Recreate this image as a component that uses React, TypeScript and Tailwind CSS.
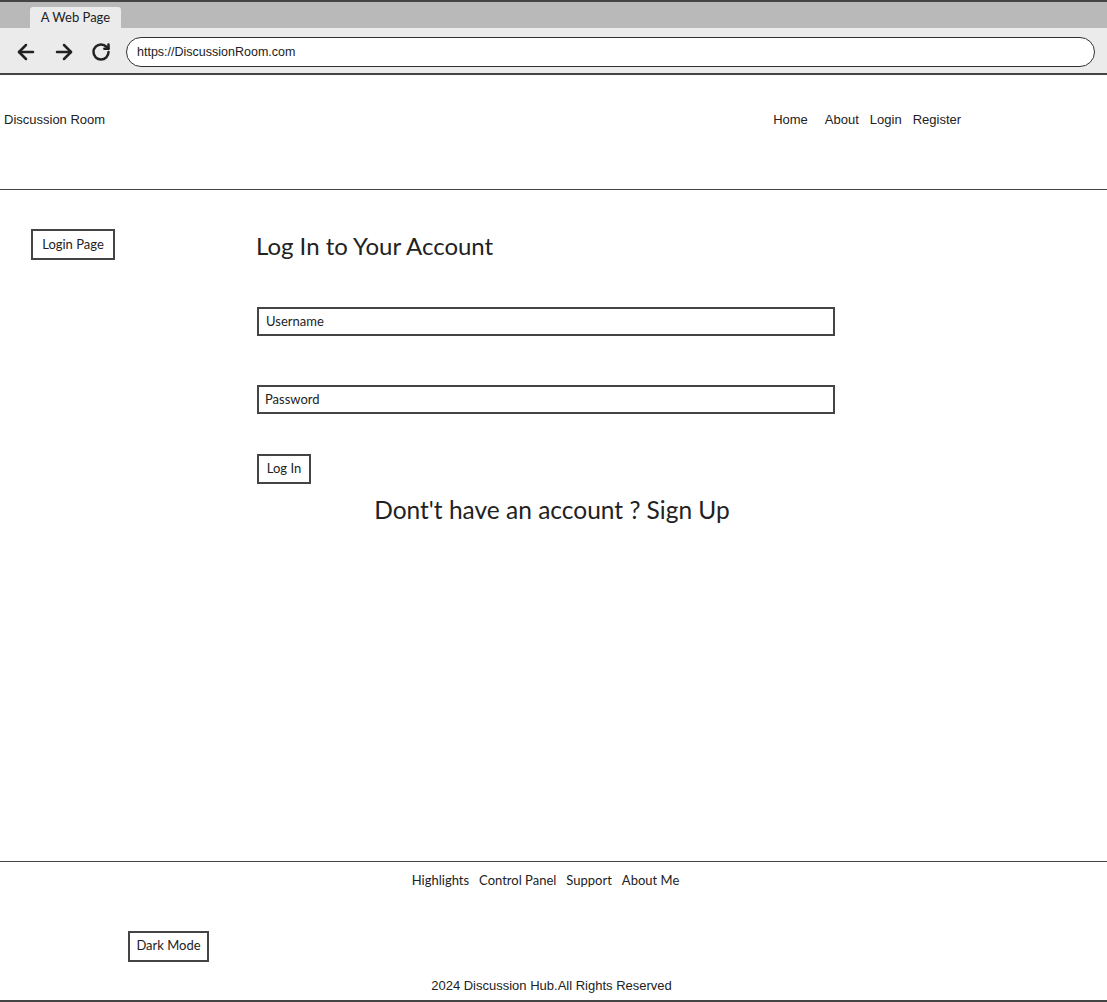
import { ArrowLeft, ArrowRight, RotateCw } from "lucide-react";

const hand = { fontFamily: "Lato, 'Noto Sans', sans-serif" };
const arial = { fontFamily: "'Liberation Sans', Arial, sans-serif" };

export default function App() {
    return (
        <div className="w-[1107px] h-[1002px] bg-white flex flex-col text-[#222] overflow-hidden" style={hand}>
            {/* browser chrome */}
            <div className="h-[75px] flex flex-col border-t-2 border-b-2 border-[#444] shrink-0">
                <div className="h-[26px] bg-[#b9b9b9] flex items-end pl-[30px]">
                    <div className="h-[21px] w-[91px] bg-[#ebebeb] rounded-t-[3px] flex items-center justify-center text-[13px]">A Web Page</div>
                </div>
                <div className="flex-1 bg-[#ebebeb] flex items-center pl-[14px] pr-[12px] pt-[3px]">
                    <ArrowLeft className="w-[24px] h-[24px]" strokeWidth={2.5} />
                    <ArrowRight className="w-[24px] h-[24px] ml-[14px]" strokeWidth={2.5} />
                    <RotateCw className="w-[20px] h-[20px] ml-[15px]" strokeWidth={3} />
                    <div className="ml-[15px] flex-1 h-[30px] bg-white rounded-full border-[1.5px] border-[#333] flex items-center pl-[10px] text-[12.5px]" style={arial}>
                        https://DiscussionRoom.com
                    </div>
                </div>
            </div>

            {/* header */}
            <header className="h-[115px] border-b-[1.5px] border-[#444] shrink-0 flex items-start pt-[35px] text-[13px]" style={arial}>
                <div className="pl-[4px]">Discussion Room</div>
                <nav className="ml-[668px] flex">
                    <span>Home</span>
                    <span className="ml-[17px]">About</span>
                    <span className="ml-[11px]">Login</span>
                    <span className="ml-[11px]">Register</span>
                </nav>
            </header>

            {/* main */}
            <main className="flex-1 flex pt-[39px]">
                <div className="w-[256px] pl-[31px] shrink-0">
                    <div className="w-[84px] h-[31px] border-2 border-[#444] flex items-center justify-center text-[13px]">Login Page</div>
                </div>
                <div className="flex flex-col w-[580px]">
                    <h1 className="text-[24px] leading-[31px] mt-[1px]">Log In to Your Account</h1>
                    <div className="mt-[46px] ml-[1px] h-[29px] w-[578px] border-2 border-[#444] flex items-center pl-[7px] text-[13px]">Username</div>
                    <div className="mt-[49px] ml-[1px] h-[29px] w-[578px] border-2 border-[#444] flex items-center pl-[6px] text-[13px]">Password</div>
                    <div className="mt-[40px] ml-[1px] h-[30px] w-[54px] border-2 border-[#444] flex items-center justify-center text-[13px]">Log In</div>
                    <p className="text-[24.5px] leading-[30px] mt-[11px] text-center pl-[12px] whitespace-nowrap">Dont't have an account ? Sign Up</p>
                </div>
            </main>

            {/* footer */}
            <footer className="h-[141px] shrink-0 border-t-[1.5px] border-b-2 border-[#444] flex flex-col">
                <div className="flex justify-center gap-[10px] text-[13px] pt-[9px] pr-[16px]">
                    <span>Highlights</span>
                    <span>Control Panel</span>
                    <span>Support</span>
                    <span>About Me</span>
                </div>
                <div className="pl-[128px] mt-[40px]">
                    <div className="w-[81px] h-[31px] border-2 border-[#444] flex items-center justify-center text-[13px]">Dark Mode</div>
                </div>
                <div className="text-center text-[13px] mt-[14px] pr-[4px]" style={arial}>
                    2024 Discussion Hub.All Rights Reserved
                </div>
            </footer>
        </div>
    );
}
